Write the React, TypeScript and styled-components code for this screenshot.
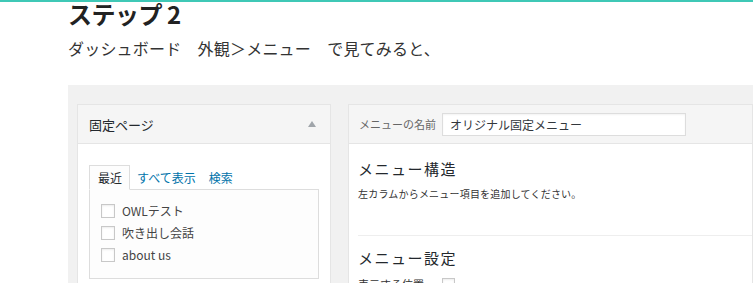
import { createGlobalStyle } from 'styled-components'
import styled from 'styled-components'

const GlobalStyle = createGlobalStyle`
  html, body {
    margin: 0;
    padding: 0;
    background: #fff;
    overflow: hidden;
  }
  body {
    font-family: "Noto Sans CJK JP", "Noto Sans", sans-serif;
    color: #333;
    border-top: 2px solid #3fc8b6;
  }
`

const Page = styled.div`
  padding-left: 68px;
  height: 281px;
  overflow: hidden;
`

const Heading = styled.h2`
  margin: 0;
  font-size: 24px;
  line-height: 24px;
  font-weight: 700;
  color: #222;
  letter-spacing: -0.5px;
`

const Lead = styled.p`
  margin: 11px 0 0;
  font-size: 16px;
  line-height: 22px;
  color: #333;
  letter-spacing: 0.2px;
`

const Shot = styled.div`
  margin-top: 26px;
  background: #f1f1f1;
  padding: 19px 0 0 9px;
  display: flex;
  gap: 17px;
  height: 200px;
  overflow: hidden;
`

const Panel = styled.div<{ $width?: number }>`
  flex: ${({ $width }) => ($width ? `0 0 ${$width}px` : '1 0 auto')};
  background: #fff;
  border: 1px solid #e5e5e5;
  box-sizing: border-box;
  display: flex;
  flex-direction: column;
`

const PanelHead = styled.div<{ $gap?: number }>`
  height: 38px;
  background: #f5f5f5;
  border-bottom: 1px solid #e5e5e5;
  display: flex;
  align-items: center;
  padding: 0 10px;
  gap: ${({ $gap }) => $gap ?? 9}px;
  font-size: 13px;
  color: #23282d;
`

const HeadTitle = styled.span`
  flex: 1;
  padding-left: 1px;
`

const Arrow = styled.span`
  width: 0;
  height: 0;
  border-left: 4px solid transparent;
  border-right: 4px solid transparent;
  border-bottom: 6px solid #a0a5aa;
  margin-right: 4px;
`

const LeftBody = styled.div`
  padding: 21px 11px 0;
`

const Tabs = styled.div`
  display: flex;
  align-items: flex-end;
  font-size: 12px;
  line-height: 14px;
`

const Tab = styled.span<{ $active?: boolean }>`
  padding: ${({ $active }) => ($active ? '5px 7px 4px 8px' : '5px 6px 4px 5px')};
  margin-right: ${({ $active }) => ($active ? '1px' : '0')};
  color: ${({ $active }) => ($active ? '#23282d' : '#0073aa')};
  border: 1px solid ${({ $active }) => ($active ? '#ddd' : 'transparent')};
  border-bottom-color: ${({ $active }) => ($active ? '#fdfdfd' : 'transparent')};
  background: ${({ $active }) => ($active ? '#fdfdfd' : 'transparent')};
  margin-bottom: -1px;
  position: relative;
`

const TabBox = styled.div`
  border: 1px solid #ddd;
  background: #fdfdfd;
  padding: 13px 11px 10px;
  height: 90px;
  box-sizing: border-box;
  display: flex;
  flex-direction: column;
  gap: 6px;
`

const Item = styled.label`
  display: flex;
  align-items: center;
  gap: 7px;
  font-size: 12px;
  line-height: 16px;
  color: #444;
`

const Check = styled.span`
  width: 14px;
  height: 14px;
  border: 1px solid #c8c8c8;
  background: #fff;
  box-sizing: border-box;
  box-shadow: inset 0 1px 2px rgba(0, 0, 0, 0.08);
`

const NameLabel = styled.span`
  font-size: 11px;
  color: #666;
`

const NameInput = styled.div`
  width: 244px;
  height: 23px;
  box-sizing: border-box;
  border: 1px solid #ddd;
  background: #fff;
  padding: 0 7px;
  display: flex;
  align-items: center;
  font-size: 12px;
  color: #32373c;
  box-shadow: inset 0 1px 2px rgba(0, 0, 0, 0.05);
`

const RightBody = styled.div`
  padding: 0 0 0 9px;
`

const SectionTitle = styled.h3`
  margin: 0;
  font-size: 15px;
  line-height: 18px;
  font-weight: 400;
  color: #23282d;
  letter-spacing: 1.5px;
`

const Note = styled.p`
  margin: 9px 0 0;
  font-size: 10px;
  line-height: 14px;
  color: #333;
  letter-spacing: 0.2px;
`

const Section = styled.div<{ $top: number; $line?: boolean }>`
  padding-top: ${({ $top }) => $top}px;
  border-top: ${({ $line }) => ($line ? '1px solid #eee' : 'none')};
`

const Structure = styled(Section)`
  height: 91px;
  box-sizing: border-box;
`

const SettingRow = styled.div`
  display: flex;
  align-items: center;
  gap: 10px;
  margin-top: 9px;
  font-size: 11px;
  color: #333;
`

const SmallCheck = styled(Check)`
  width: 13px;
  height: 13px;
  margin-left: 8px;
`

export default function App() {
  return (
    <>
      <GlobalStyle />
      <Page>
        <Heading>ステップ 2</Heading>
        <Lead>ダッシュボード　外観＞メニュー　で見てみると、</Lead>
        <Shot>
          <Panel $width={254}>
            <PanelHead>
              <HeadTitle>固定ページ</HeadTitle>
              <Arrow />
            </PanelHead>
            <LeftBody>
              <Tabs>
                <Tab $active>最近</Tab>
                <Tab>すべて表示</Tab>
                <Tab>検索</Tab>
              </Tabs>
              <TabBox>
                <Item><Check />OWLテスト</Item>
                <Item><Check />吹き出し会話</Item>
                <Item><Check />about us</Item>
              </TabBox>
            </LeftBody>
          </Panel>
          <Panel>
            <PanelHead $gap={6}>
              <NameLabel>メニューの名前</NameLabel>
              <NameInput>オリジナル固定メニュー</NameInput>
            </PanelHead>
            <RightBody>
              <Structure $top={16}>
                <SectionTitle>メニュー構造</SectionTitle>
                <Note>左カラムからメニュー項目を追加してください。</Note>
              </Structure>
              <Section $top={13} $line>
                <SectionTitle>メニュー設定</SectionTitle>
                <SettingRow>
                  表示する位置
                  <SmallCheck />
                </SettingRow>
              </Section>
            </RightBody>
          </Panel>
        </Shot>
      </Page>
    </>
  )
}
